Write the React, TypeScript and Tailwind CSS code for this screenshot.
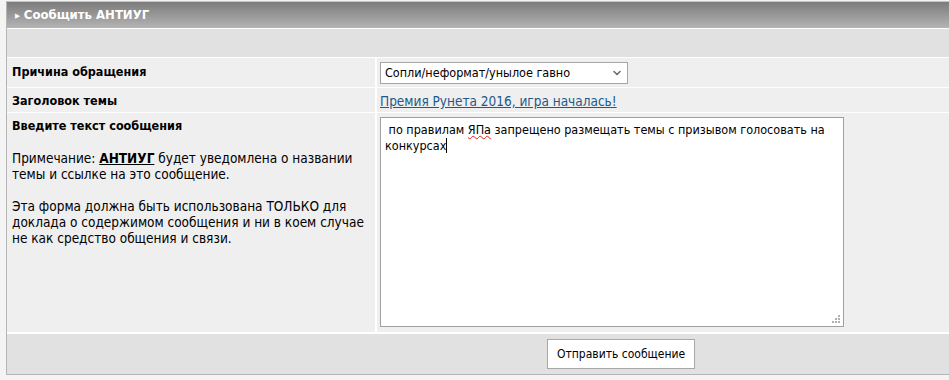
import { ChevronDown } from "lucide-react";

function App() {
  return (
    <div
      className="w-[949px] h-[380px] bg-[#f4f4f4] pt-[1px] overflow-hidden text-[13px] text-black"
      style={{ fontFamily: '"DejaVu Sans Condensed", "DejaVu Sans", Verdana, sans-serif' }}
    >
      <div className="ml-[6px] border-l border-b border-[#b4b4b4] bg-white">
        {/* header */}
        <div className="h-[27px] border-t border-[#c4c4c4] bg-gradient-to-b from-[#7c7c7c] to-[#b4b4b4] flex items-center pl-[8px] text-white font-bold">
          <span className="text-[7px] mr-[4px] mt-[2px]">▶</span>
          <span>Сообщить АНТИУГ</span>
        </div>
        <div className="h-[28px] mt-[1px] bg-[#e1e1e1]" />

        <div className="grid grid-cols-[368px_1fr] gap-x-[2px] gap-y-[1px] mt-[1px]">
          <div className="bg-[#efefef] h-[29px] pl-[5px] pt-[5px] font-bold text-[12.5px]">Причина обращения</div>
          <div className="bg-[#efefef] h-[29px] pl-[3px] pt-[4px]">
            <div className="w-[248px] h-[22px] bg-white border border-[#a5a5a5] flex items-center justify-between pl-[4px] pr-[4px] text-[12.5px]">
              <span>Сопли/неформат/унылое гавно</span>
              <ChevronDown size={12} strokeWidth={3} className="text-[#6a6a6a]" />
            </div>
          </div>

          <div className="bg-[#efefef] h-[24px] pl-[5px] pt-[4px] font-bold text-[12.5px]">Заголовок темы</div>
          <div className="bg-[#efefef] h-[24px] pl-[3px] pt-[3px]">
            <a href="#" className="text-[#1c5a8a] underline text-[13.5px]">Премия Рунета 2016, игра началась!</a>
          </div>

          <div className="bg-[#efefef] h-[219px] pl-[5px] pt-[5px] leading-[16px] text-[13.5px]">
            <div className="font-bold text-[12.5px]">Введите текст сообщения</div>
            <p className="mt-[16px]">
              Примечание: <span className="font-bold underline">АНТИУГ</span> будет уведомлена о названии темы и ссылке на это сообщение.
            </p>
            <p className="mt-[16px] pr-[6px]">
              Эта форма должна быть использована ТОЛЬКО для доклада о содержимом сообщения и ни в коем случае не как средство общения и связи.
            </p>
          </div>
          <div className="bg-[#efefef] h-[219px] pl-[3px] pt-[4px]">
            <div className="relative w-[464px] h-[210px] bg-white border border-[#a0a0a0] px-[4px] pt-[4px] leading-[16px] text-[12.5px]">
              <span className="whitespace-pre">
                {" по правилам "}
                <span className="underline decoration-wavy decoration-[#e02020] decoration-1">ЯПа</span>
                {" запрещено размещать темы с призывом голосовать на"}
              </span>
              <br />
              <span>конкурсах</span>
              <span className="inline-block w-[1px] h-[15px] bg-black align-[-3px]" />
              <svg className="absolute right-[2px] bottom-[2px]" width="9" height="9" viewBox="0 0 9 9">
                <rect x="6" y="0" width="2" height="2" fill="#b0b0b0" />
                <rect x="3" y="3" width="2" height="2" fill="#b0b0b0" />
                <rect x="6" y="3" width="2" height="2" fill="#b0b0b0" />
                <rect x="0" y="6" width="2" height="2" fill="#b0b0b0" />
                <rect x="3" y="6" width="2" height="2" fill="#b0b0b0" />
                <rect x="6" y="6" width="2" height="2" fill="#b0b0b0" />
              </svg>
            </div>
          </div>
        </div>

        {/* footer */}
        <div className="h-[40px] mt-[2px] bg-[#e1e1e1] flex items-center pl-[540px]">
          <button className="h-[30px] px-[9px] bg-white border border-[#a8a8a8] text-[12px]">
            Отправить сообщение
          </button>
        </div>
      </div>
    </div>
  );
}

export default App;
